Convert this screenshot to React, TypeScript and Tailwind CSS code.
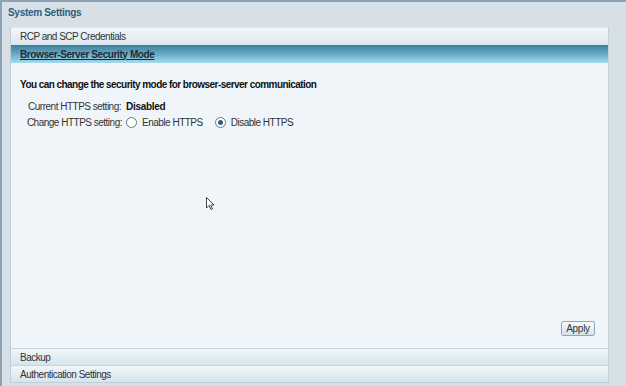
import React from "react";

const Row = ({ label }: { label: string }) => (
  <div className="h-[17px] flex items-center pl-[9px] border-t border-[#c5d3dc] bg-gradient-to-b from-[#f1f6f9] to-[#d6e4ed] text-[10px] tracking-[-0.5px] text-[#333]">
    {label}
  </div>
);

const Radio = ({ checked }: { checked?: boolean }) => (
  <span className="w-[11px] h-[11px] rounded-full border border-[#6b7780] bg-white flex items-center justify-center">
    {checked && <span className="w-[5px] h-[5px] rounded-full bg-[#2d5f8a]" />}
  </span>
);

export default function App() {
  return (
    <div
      className="w-[626px] h-[386px] bg-[#d6e0e6] border-t-2 border-l-2 border-[#8aa2b2] flex flex-col"
      style={{ fontFamily: '"Liberation Sans", Arial, sans-serif' }}
    >
      <div className="h-[25px] pl-[6px] pt-[3px] text-[10px] tracking-[-0.3px] font-bold text-[#2f5d80]">System Settings</div>
      <div className="ml-[8px] w-[599px] h-[356px] flex flex-col border border-[#c0ced8] border-t-0 bg-[#f0f5f9]">
        <div className="h-[18px] flex items-center pl-[9px] bg-gradient-to-b from-[#f2f7fa] to-[#dbe7ef] text-[10px] tracking-[-0.5px] text-[#333] border-t border-[#dfe8ee]">
          RCP and SCP Credentials
        </div>
        <div className="h-[18px] flex items-center pl-[9px] bg-gradient-to-b from-[#3f7f9c] via-[#66aac6] to-[#a8daeb] text-[10px] tracking-[-0.4px] font-bold text-[#1d2b35] underline">
          Browser-Server Security Mode
        </div>
        <div className="flex-1 flex flex-col px-[9px] pt-[14px] text-[10px] tracking-[-0.5px] text-[#333] relative">
          <div className="font-bold text-[#111] tracking-[-0.55px]">You can change the security mode for browser-server communication</div>
          <div className="mt-[7px] flex items-center h-[15px]">
            <span className="w-[106px] text-right pr-[5px] whitespace-nowrap">Current HTTPS setting:</span>
            <span className="font-bold text-[#111] tracking-[-0.3px]">Disabled</span>
          </div>
          <div className="flex items-center h-[16px]">
            <span className="w-[106px] text-right pr-[4px] whitespace-nowrap">Change HTTPS setting:</span>
            <Radio />
            <span className="ml-[5px]">Enable HTTPS</span>
            <span className="ml-[12px]"><Radio checked /></span>
            <span className="ml-[5px]">Disable HTTPS</span>
          </div>
          <div className="flex-1" />
          <div className="flex justify-end pr-[4px] pb-[12px]">
            <button className="h-[15px] w-[34px] rounded-[2px] border border-[#8ea6b8] bg-gradient-to-b from-[#f7fafc] to-[#d6e2ea] text-[10px] tracking-[-0.3px] text-[#333] leading-none">
              Apply
            </button>
          </div>
          <svg className="absolute left-[195px] top-[134px]" width="9" height="14" viewBox="0 0 9 14">
            <path d="M0.5 0.5 L0.5 11 L3 8.5 L5 12.5 L6.5 11.8 L4.6 8 L8 8 Z" fill="white" stroke="#444" strokeWidth="1" />
          </svg>
        </div>
        <Row label="Backup" />
        <Row label="Authentication Settings" />
      </div>
    </div>
  );
}
